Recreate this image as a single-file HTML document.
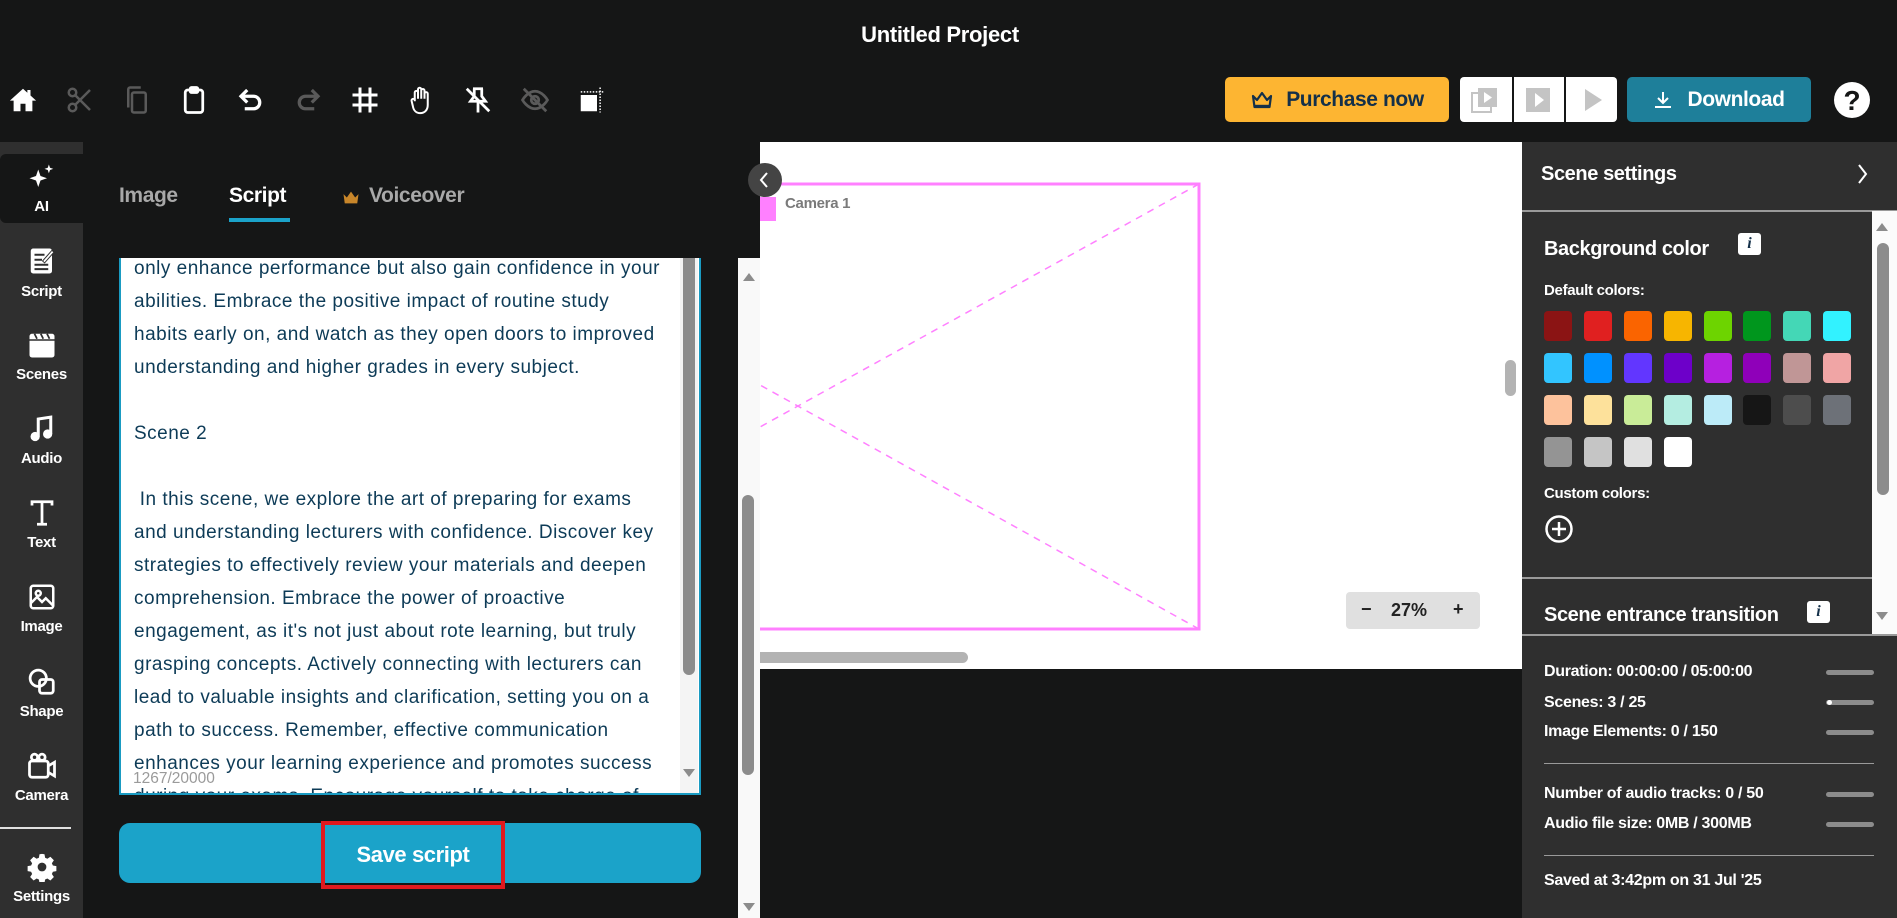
<!DOCTYPE html>
<html><head><meta charset="utf-8">
<style>
*{box-sizing:border-box;margin:0;padding:0}
body{width:1897px;height:918px;overflow:hidden;background:#151616;font-family:"Liberation Sans",sans-serif;position:relative;color:#fff}
.abs{position:absolute}
.title{left:0;width:1880px;top:22px;text-align:center;font-weight:bold;font-size:22px;letter-spacing:-0.3px}
.ti{position:absolute;top:85px;width:30px;height:30px}
.btn{position:absolute;top:77px;height:45px;border-radius:5px;font-weight:bold;font-size:21px;display:flex;align-items:center;justify-content:center;letter-spacing:-0.4px}
.side{left:0;top:142px;width:83px;height:776px;background:#2f2f2f}
.si{position:absolute;left:0;width:83px;text-align:center;font-weight:bold;font-size:15px;color:#fff;letter-spacing:-0.3px}
.si svg{display:block;margin:0 auto 6px}
.tab{position:absolute;top:184px;font-weight:bold;font-size:21px;letter-spacing:-0.4px}
.ta{left:119px;top:258px;width:582px;height:537px;background:#fff;border:2.5px solid #1a9bc2;border-top:none;overflow:hidden}
.txt{position:absolute;left:13px;top:-6px;white-space:pre;font-size:19px;line-height:33px;color:#0d3b57;letter-spacing:0.5px}
.sw{position:absolute;width:28px;height:30px;border-radius:4px}
.st{position:absolute;left:1544px;font-weight:bold;font-size:16px;letter-spacing:-0.3px}
.bar{position:absolute;left:1826px;width:48px;height:5px;border-radius:3px;background:#8c8c8c}
.hr{position:absolute;left:1544px;width:330px;height:1px;background:#9a9a9a}
</style></head><body>
<div class="abs title">Untitled Project</div>

<svg class="ti" style="left:8px" viewBox="0 0 24 24"><path d="M12 3L1.5 12.5h3V21h5.5v-6h4v6H19.5v-8.5h3L18 8.4V4h-2.5v2.2z" fill="#fff"/></svg>
<svg class="ti" style="left:65px" viewBox="0 0 24 24" fill="none" stroke="#5a5a5a" stroke-width="2"><circle cx="6" cy="6" r="3"/><circle cx="6" cy="18" r="3"/><path d="M8.2 8.2L20 20M8.2 15.8L20 4"/></svg>
<svg class="ti" style="left:122px" viewBox="0 0 24 24" fill="none" stroke="#5a5a5a" stroke-width="2"><rect x="8" y="6" width="11" height="16" rx="1.5"/><path d="M5 18V3.5A1.5 1.5 0 016.5 2H15"/></svg>
<svg class="ti" style="left:179px" viewBox="0 0 24 24" fill="none" stroke="#fff" stroke-width="2.2"><rect x="5" y="4" width="14" height="18" rx="2"/><rect x="9" y="2" width="6" height="4" rx="1" fill="#fff"/></svg>
<svg class="ti" style="left:236px" viewBox="0 0 24 24" fill="none" stroke="#fff" stroke-width="2.6"><path d="M9 4L4 9l5 5"/><path d="M4 9h10a5 5 0 010 10H7"/></svg>
<svg class="ti" style="left:293px" viewBox="0 0 24 24" fill="none" stroke="#5a5a5a" stroke-width="2.6"><path d="M15 4l5 5-5 5"/><path d="M20 9H10a5 5 0 000 10h7"/></svg>
<svg class="ti" style="left:350px" viewBox="0 0 24 24" fill="none" stroke="#fff" stroke-width="2.4"><path d="M8 2v20M16 2v20M2 8h20M2 16h20"/></svg>
<svg class="ti" style="left:406px" viewBox="0 0 24 24" fill="none" stroke="#fff" stroke-width="1.6"><path d="M7 13V6a1.3 1.3 0 012.6 0v5V3.5a1.3 1.3 0 012.6 0V11V4.5a1.3 1.3 0 012.6 0V11V7a1.3 1.3 0 012.6 0v9c0 4-2.5 6.5-6 6.5S6 20 5.5 17L4.5 12.8a1.3 1.3 0 012.5-.8z"/></svg>
<svg class="ti" style="left:463px" viewBox="0 0 24 24" fill="none" stroke="#fff" stroke-width="2.2"><path d="M8 3h8M9 3v6l-3 4h12l-3-4V3M12 13v9M3 3l18 18"/></svg>
<svg class="ti" style="left:520px" viewBox="0 0 24 24" fill="none" stroke="#5a5a5a" stroke-width="2.2"><path d="M2 12s4-7 10-7 10 7 10 7-4 7-10 7S2 12 2 12z"/><circle cx="12" cy="12" r="3"/><path d="M3 3l18 18"/></svg>
<svg class="ti" style="left:577px" viewBox="0 0 24 24"><rect x="3" y="8" width="13" height="13" fill="#fff"/><path d="M3 5.5h18M18.5 2v20" stroke="#fff" stroke-width="1.2" stroke-dasharray="1.2 1.2"/></svg>

<div class="btn" style="left:1225px;width:224px;background:#fdb532;color:#143049">
<svg width="24" height="20" viewBox="0 0 24 20" style="margin-right:12px"><path d="M3 6l4 4 5-7 5 7 4-4-1.5 11h-15z" fill="none" stroke="#143049" stroke-width="2.2" stroke-linejoin="round"/><path d="M4.5 16h15" stroke="#143049" stroke-width="2.4"/></svg>Purchase now</div>
<div class="abs" style="left:1460px;top:77px;width:157px;height:45px;background:#fff;border-radius:4px"></div>
<div class="abs" style="left:1512px;top:77px;width:1.5px;height:45px;background:#151616"></div>
<div class="abs" style="left:1564px;top:77px;width:1.5px;height:45px;background:#151616"></div>
<svg class="abs" style="left:1470px;top:86px" width="32" height="28" viewBox="0 0 32 28"><rect x="2" y="7" width="19" height="19" fill="none" stroke="#c4c4c4" stroke-width="2"/><rect x="8" y="2" width="19" height="19" fill="#c4c4c4"/><path d="M14 6l8 5.5-8 5.5z" fill="#fff"/></svg>
<svg class="abs" style="left:1524px;top:86px" width="28" height="28" viewBox="0 0 28 28"><rect x="2" y="2" width="24" height="24" fill="#c4c4c4"/><path d="M11 7l9 7-9 7z" fill="#fff"/></svg>
<svg class="abs" style="left:1578px;top:86px" width="28" height="28" viewBox="0 0 28 28"><path d="M7 3l17 11-17 11z" fill="#c4c4c4"/></svg>
<div class="btn" style="left:1627px;width:184px;background:#1e7f9a;color:#fff">
<svg width="20" height="20" viewBox="0 0 20 20" style="margin-right:14px" fill="none" stroke="#fff" stroke-width="2"><path d="M10 2v11M5 8l5 5 5-5M2 17h16"/></svg>Download</div>
<div class="abs" style="left:1834px;top:82px;width:36px;height:36px;border-radius:50%;background:#fff;color:#151616;font-weight:bold;font-size:28px;text-align:center;line-height:37px">?</div>

<div class="abs side"></div>
<div class="abs" style="left:0;top:154px;width:83px;height:69px;background:#151616;border-radius:6px 0 0 6px"></div>
<div class="si" style="top:162px"><svg width="30" height="30" viewBox="0 0 24 24" fill="#fff"><path d="M9 6l1.8 5.2L16 13l-5.2 1.8L9 20l-1.8-5.2L2 13l5.2-1.8z"/><path d="M17.5 2l.9 2.6 2.6.9-2.6.9-.9 2.6-.9-2.6-2.6-.9 2.6-.9z"/></svg>AI</div>
<div class="si" style="top:245px"><svg width="30" height="32" viewBox="0 0 24 24"><rect x="3" y="2" width="17" height="20" rx="2" fill="#fff"/><path d="M6 7h8M6 11h6M6 15h11M6 18.5h11" stroke="#2f2f2f" stroke-width="1.6"/><path d="M13 13l8-9" stroke="#2f2f2f" stroke-width="3"/><path d="M13.5 12.5l7-8" stroke="#fff" stroke-width="1.4"/></svg>Script</div>
<div class="si" style="top:330px"><svg width="32" height="30" viewBox="0 0 24 24"><rect x="2" y="3" width="20" height="19" rx="2" fill="#fff"/><path d="M6 3l2 4M11 3l2 4M16 3l2 4" stroke="#2f2f2f" stroke-width="1.4"/><path d="M2 8h20" stroke="#2f2f2f" stroke-width="1.2"/></svg>Scenes</div>
<div class="si" style="top:414px"><svg width="30" height="30" viewBox="0 0 24 24" fill="none" stroke="#fff" stroke-width="2.4"><path d="M9 18V4l10-1.5V16"/><circle cx="6.5" cy="18" r="2.5" fill="#fff"/><circle cx="16.5" cy="16" r="2.5" fill="#fff"/></svg>Audio</div>
<div class="si" style="top:498px"><svg width="30" height="30" viewBox="0 0 24 24" fill="none" stroke="#fff" stroke-width="2.2"><path d="M4 6V3h16v3M12 3v18M8 21h8"/></svg>Text</div>
<div class="si" style="top:582px"><svg width="30" height="30" viewBox="0 0 24 24" fill="none" stroke="#fff" stroke-width="2"><rect x="3" y="3" width="18" height="18" rx="2"/><circle cx="9" cy="9" r="2"/><path d="M3 17l5-5 4 4 3-3 6 6"/></svg>Image</div>
<div class="si" style="top:667px"><svg width="30" height="30" viewBox="0 0 24 24" fill="none" stroke="#fff" stroke-width="2.2"><circle cx="9" cy="9" r="6.5"/><rect x="10" y="10" width="11" height="11" rx="2"/></svg>Shape</div>
<div class="si" style="top:751px"><svg width="30" height="30" viewBox="0 0 24 24" fill="none" stroke="#fff" stroke-width="2.2"><rect x="2" y="8" width="15" height="13" rx="2"/><path d="M17 12l5-3v11l-5-3"/><circle cx="6" cy="5" r="2.5"/><circle cx="12" cy="5" r="2.5"/></svg>Camera</div>
<div class="abs" style="left:0;top:827px;width:71px;height:2px;background:#e0e0e0"></div>
<div class="si" style="top:852px"><svg width="30" height="30" viewBox="0 0 24 24"><path d="M12 1.5l2 .3.5 2.8 1.8.8 2.4-1.6 2.8 2.8-1.6 2.4.8 1.8 2.8.5v4l-2.8.5-.8 1.8 1.6 2.4-2.8 2.8-2.4-1.6-1.8.8-.5 2.8h-4l-.5-2.8-1.8-.8-2.4 1.6-2.8-2.8 1.6-2.4-.8-1.8-2.8-.5v-4l2.8-.5.8-1.8-1.6-2.4 2.8-2.8 2.4 1.6 1.8-.8.5-2.8z" fill="#fff"/><circle cx="12" cy="12" r="3.5" fill="#2f2f2f"/></svg>Settings</div>

<div class="tab" style="left:119px;color:#a8a8a8">Image</div>
<div class="tab" style="left:229px;color:#fff">Script</div>
<div class="abs" style="left:229px;top:218px;width:61px;height:4px;background:#1ba3c9"></div>
<svg class="abs" style="left:341px;top:189px" width="20" height="17" viewBox="0 0 24 20"><path d="M3 6l4 4 5-7 5 7 4-4-1.5 11h-15z" fill="#c8862a"/></svg>
<div class="tab" style="left:369px;color:#a8a8a8">Voiceover</div>

<div class="abs ta">
<div class="txt">only enhance performance but also gain confidence in your
abilities. Embrace the positive impact of routine study
habits early on, and watch as they open doors to improved
understanding and higher grades in every subject.

Scene 2

 In this scene, we explore the art of preparing for exams
and understanding lecturers with confidence. Discover key
strategies to effectively review your materials and deepen
comprehension. Embrace the power of proactive
engagement, as it's not just about rote learning, but truly
grasping concepts. Actively connecting with lecturers can
lead to valuable insights and clarification, setting you on a
path to success. Remember, effective communication
enhances your learning experience and promotes success
during your exams. Encourage yourself to take charge of</div>
<div class="abs" style="left:559px;top:0;width:18px;height:537px;background:#f4f4f4"></div>
<div class="abs" style="left:562px;top:0;width:12px;height:417px;background:#8c8c8c;border-radius:0 0 6px 6px"></div>
<svg class="abs" style="left:561px;top:510px" width="14" height="10"><path d="M1 1h12L7 9z" fill="#8c8c8c"/></svg>
<div class="abs" style="left:12px;top:512px;font-size:15.5px;color:#9a9a9a;background:rgba(255,255,255,.6)">1267/20000</div>
</div>

<div class="abs" style="left:119px;top:823px;width:582px;height:60px;background:#1ba3c9;border-radius:11px"></div>
<div class="abs" style="left:321px;top:821px;width:184px;height:68px;border:4px solid #e0191e;color:#fff;font-weight:bold;font-size:22px;text-align:center;line-height:60px;letter-spacing:-0.4px">Save script</div>

<div class="abs" style="left:738px;top:258px;width:22px;height:660px;background:#f9f9f9"></div>
<svg class="abs" style="left:742px;top:272px" width="14" height="10"><path d="M1 9h12L7 1z" fill="#8c8c8c"/></svg>
<div class="abs" style="left:742px;top:495px;width:12px;height:280px;background:#8c8c8c;border-radius:6px"></div>
<svg class="abs" style="left:742px;top:902px" width="14" height="10"><path d="M1 1h12L7 9z" fill="#8c8c8c"/></svg>

<div class="abs" style="left:760px;top:142px;width:762px;height:527px;background:#fff;overflow:hidden">
<svg class="abs" style="left:0;top:0" width="762" height="527">
<path d="M439 42L0 285M439 487L0 243" stroke="#ff80ff" stroke-width="1.5" stroke-dasharray="7 6"/>
<path d="M-5 42H439V487H-5" fill="none" stroke="#ff80ff" stroke-width="3"/>
<rect x="0" y="55" width="16" height="24" fill="#ff80ff"/>
</svg>
<div class="abs" style="left:25px;top:53px;color:#7a7a7a;font-weight:bold;font-size:15px;letter-spacing:-0.3px">Camera 1</div>
<div class="abs" style="left:745px;top:218px;width:11px;height:36px;background:#b3b3b3;border-radius:6px"></div>
<div class="abs" style="left:0;top:510px;width:208px;height:11px;background:#b3b3b3;border-radius:0 6px 6px 0"></div>
<div class="abs" style="left:586px;top:450px;width:134px;height:37px;background:#e0e0e0;border-radius:4px;color:#222;font-weight:bold;font-size:18px">
<span class="abs" style="left:15px;top:7px">−</span><span class="abs" style="left:45px;top:8px">27%</span><span class="abs" style="left:107px;top:7px">+</span></div>
</div>
<div class="abs" style="left:748px;top:163px;width:34px;height:34px;border-radius:50%;background:#444"></div>
<svg class="abs" style="left:756px;top:170px" width="18" height="20"><path d="M11 3l-6 7 6 7" fill="none" stroke="#fff" stroke-width="2"/></svg>

<div class="abs" style="left:1522px;top:142px;width:375px;height:776px;background:#2f2f2f"></div>
<div class="abs" style="left:1541px;top:163px;font-weight:bold;font-size:20px;letter-spacing:-0.4px">Scene settings</div>
<svg class="abs" style="left:1856px;top:163px" width="14" height="22"><path d="M3 2l7 9-7 9" fill="none" stroke="#fff" stroke-width="2"/></svg>
<div class="abs" style="left:1522px;top:210px;width:375px;height:1.5px;background:#9a9a9a"></div>
<div class="abs" style="left:1872px;top:211px;width:25px;height:424px;background:#fbfbfb"></div>
<svg class="abs" style="left:1875px;top:222px" width="14" height="10"><path d="M1 9h12L7 1z" fill="#8c8c8c"/></svg>
<div class="abs" style="left:1877px;top:243px;width:12px;height:252px;background:#8c8c8c;border-radius:6px"></div>
<svg class="abs" style="left:1875px;top:611px" width="14" height="10"><path d="M1 1h12L7 9z" fill="#8c8c8c"/></svg>

<div class="abs" style="left:1544px;top:238px;font-weight:bold;font-size:20px;letter-spacing:-0.4px">Background color</div>
<div class="abs" style="left:1738px;top:233px;width:23px;height:22px;background:#fff;border-radius:3px;color:#143049;font:italic bold 16px 'Liberation Serif',serif;text-align:center;line-height:22px">i</div>
<div class="abs" style="left:1544px;top:282px;font-weight:bold;font-size:15px;letter-spacing:-0.3px">Default colors:</div>

<div class="sw" style="left:1544px;top:311px;background:#8b1414"></div>
<div class="sw" style="left:1584px;top:311px;background:#e02020"></div>
<div class="sw" style="left:1624px;top:311px;background:#fa6400"></div>
<div class="sw" style="left:1664px;top:311px;background:#f7b500"></div>
<div class="sw" style="left:1704px;top:311px;background:#6dd400"></div>
<div class="sw" style="left:1743px;top:311px;background:#00961d"></div>
<div class="sw" style="left:1783px;top:311px;background:#44d7b6"></div>
<div class="sw" style="left:1823px;top:311px;background:#32f2ff"></div>
<div class="sw" style="left:1544px;top:353px;background:#32c5ff"></div>
<div class="sw" style="left:1584px;top:353px;background:#0091ff"></div>
<div class="sw" style="left:1624px;top:353px;background:#6236ff"></div>
<div class="sw" style="left:1664px;top:353px;background:#6d00c9"></div>
<div class="sw" style="left:1704px;top:353px;background:#b620e0"></div>
<div class="sw" style="left:1743px;top:353px;background:#8f00b9"></div>
<div class="sw" style="left:1783px;top:353px;background:#c09696"></div>
<div class="sw" style="left:1823px;top:353px;background:#f0a5a5"></div>
<div class="sw" style="left:1544px;top:395px;background:#fdc29c"></div>
<div class="sw" style="left:1584px;top:395px;background:#fde19b"></div>
<div class="sw" style="left:1624px;top:395px;background:#c9ec98"></div>
<div class="sw" style="left:1664px;top:395px;background:#b4ede1"></div>
<div class="sw" style="left:1704px;top:395px;background:#bcebf8"></div>
<div class="sw" style="left:1743px;top:395px;background:#161616"></div>
<div class="sw" style="left:1783px;top:395px;background:#4d4d4d"></div>
<div class="sw" style="left:1823px;top:395px;background:#6d7178"></div>
<div class="sw" style="left:1544px;top:437px;background:#949494"></div>
<div class="sw" style="left:1584px;top:437px;background:#c5c5c5"></div>
<div class="sw" style="left:1624px;top:437px;background:#e0e0e0"></div>
<div class="sw" style="left:1664px;top:437px;background:#ffffff"></div>

<div class="abs" style="left:1544px;top:485px;font-weight:bold;font-size:15px;letter-spacing:-0.3px">Custom colors:</div>
<svg class="abs" style="left:1544px;top:514px" width="30" height="30"><circle cx="15" cy="15" r="12.5" fill="none" stroke="#fff" stroke-width="2.5"/><path d="M15 8v14M8 15h14" stroke="#fff" stroke-width="2.5"/></svg>
<div class="abs" style="left:1522px;top:577px;width:350px;height:1.5px;background:#9a9a9a"></div>
<div class="abs" style="left:1544px;top:604px;font-weight:bold;font-size:20px;letter-spacing:-0.4px">Scene entrance transition</div>
<div class="abs" style="left:1807px;top:601px;width:23px;height:22px;background:#fff;border-radius:3px;color:#143049;font:italic bold 16px 'Liberation Serif',serif;text-align:center;line-height:22px">i</div>
<div class="abs" style="left:1522px;top:634px;width:375px;height:1.5px;background:#9a9a9a"></div>

<div class="st" style="top:663px">Duration: 00:00:00 / 05:00:00</div><div class="bar" style="top:670px"></div>
<div class="st" style="top:694px">Scenes: 3 / 25</div><div class="bar" style="top:700px"></div><div class="abs" style="left:1827px;top:700px;width:5px;height:5px;border-radius:50%;background:#fff"></div>
<div class="st" style="top:723px">Image Elements: 0 / 150</div><div class="bar" style="top:730px"></div>
<div class="hr" style="top:763px"></div>
<div class="st" style="top:785px">Number of audio tracks: 0 / 50</div><div class="bar" style="top:792px"></div>
<div class="st" style="top:815px">Audio file size: 0MB / 300MB</div><div class="bar" style="top:822px"></div>
<div class="hr" style="top:855px"></div>
<div class="st" style="top:872px">Saved at 3:42pm on 31 Jul '25</div>
</body></html>
